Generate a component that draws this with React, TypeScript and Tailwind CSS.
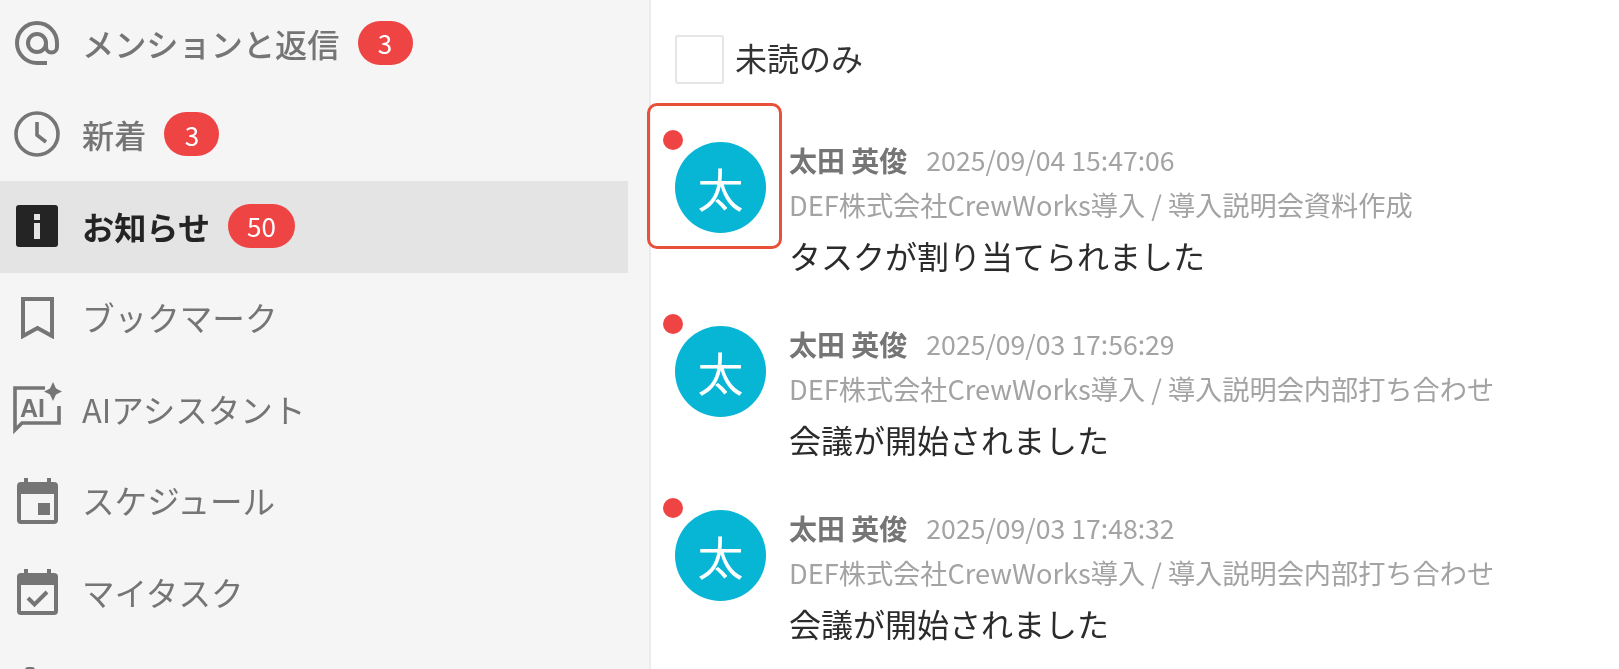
import type { ReactNode } from "react";

const FONT = "font-['Noto_Sans_CJK_JP','Noto_Sans',sans-serif]";
const GRAY = "#757575";

function AtIcon() {
  return (
    <svg viewBox="0 0 46 46" className="h-[46px] w-[46px]" fill="none" stroke={GRAY} strokeWidth="4">
      <circle cx="23" cy="23" r="9" />
      <path d="M32 23v4a5.5 5.5 0 0 0 11 0v-4a20 20 0 1 0-20 20h10" />
    </svg>
  );
}

function ClockIcon() {
  return (
    <svg viewBox="0 0 46 46" className="h-[46px] w-[46px]" fill="none" stroke={GRAY} strokeWidth="3.6">
      <circle cx="23" cy="23" r="21" />
      <path d="M23 11v13l9 7" />
    </svg>
  );
}

function InfoSquare() {
  return (
    <svg viewBox="0 0 42 42" className="h-[42px] w-[42px]">
      <rect width="42" height="42" rx="3" fill="#242424" />
      <rect x="18" y="9" width="6" height="6" fill="#e4e4e4" />
      <rect x="18" y="18" width="6" height="16" fill="#e4e4e4" />
    </svg>
  );
}

function BookmarkIcon() {
  return (
    <svg viewBox="0 0 33 42" className="h-[42px] w-[33px]" fill="none" stroke={GRAY} strokeWidth="4">
      <path d="M2 2h29v37l-14.5-8L2 39z" />
    </svg>
  );
}

function AiChat() {
  return (
    <svg viewBox="0 0 50 54" className="h-[54px] w-[50px]">
      <path d="M33 6H3v42l7-7h37V24" fill="none" stroke={GRAY} strokeWidth="3.6" />
      <text x="8" y="35" fontSize="25" fontWeight="700" fill={GRAY} fontFamily="Liberation Sans, sans-serif">AI</text>
      <path d="M41 0l3 6.5 6 3-6 3-3 6.5-3-6.5-6-3 6-3z" fill={GRAY} />
    </svg>
  );
}

function CalendarIcon({ children }: { children: ReactNode }) {
  return (
    <svg viewBox="0 0 41 46" className="h-[46px] w-[41px]">
      <rect x="7" y="0" width="4" height="8" fill={GRAY} />
      <rect x="30" y="0" width="4" height="8" fill={GRAY} />
      <rect y="4" width="41" height="42" rx="4" fill={GRAY} />
      <rect x="4" y="16" width="33" height="26" fill="#f5f5f5" />
      {children}
    </svg>
  );
}

type Item = { label: string; icon: ReactNode; badge?: string; active?: boolean };

const items: Item[] = [
  { label: "メンションと返信", icon: <AtIcon />, badge: "3" },
  { label: "新着", icon: <ClockIcon />, badge: "3" },
  { label: "お知らせ", icon: <InfoSquare />, badge: "50", active: true },
  { label: "ブックマーク", icon: <BookmarkIcon /> },
  { label: "AIアシスタント", icon: <AiChat /> },
  { label: "スケジュール", icon: <CalendarIcon><rect x="21" y="25" width="12" height="12" fill={GRAY} /></CalendarIcon> },
  { label: "マイタスク", icon: <CalendarIcon><path d="M11 29l6.5 6.5L30 23" fill="none" stroke={GRAY} strokeWidth="4" /></CalendarIcon> },
  // next row, only the tip of its icon is on screen
  { label: "", icon: <svg viewBox="0 0 42 33" className="h-[33px] w-[42px]"><rect x="9" y="0" width="10" height="33" rx="3" fill={GRAY} /></svg> },
];

const notices = [
  { date: "2025/09/04 15:47:06", path: "DEF株式会社CrewWorks導入 / 導入説明会資料作成", title: "タスクが割り当てられました" },
  { date: "2025/09/03 17:56:29", path: "DEF株式会社CrewWorks導入 / 導入説明会内部打ち合わせ", title: "会議が開始されました" },
  { date: "2025/09/03 17:48:32", path: "DEF株式会社CrewWorks導入 / 導入説明会内部打ち合わせ", title: "会議が開始されました" },
];

function SideRow({ item }: { item: Item }) {
  return (
    <div className={`flex h-[91.6px] shrink-0 items-center pb-[2px] ${item.active ? "bg-[#e4e4e4] font-bold text-[#242424]" : "text-[#757575]"}`}>
      <div className="flex w-[74px] shrink-0 justify-center">{item.icon}</div>
      <span className={`ml-[8px] leading-none ${item.badge ? "text-[32.2px]" : "text-[32.6px]"} ${item.badge && !item.active ? "font-medium" : ""}`}>{item.label}</span>
      {item.badge && (
        <span className="ml-[18px] flex h-[44px] min-w-[55px] items-center justify-center rounded-full bg-[#ef4444] px-[19px] text-[26px] font-normal text-white">
          {item.badge}
        </span>
      )}
    </div>
  );
}

function Notice({ n }: { n: (typeof notices)[number] }) {
  return (
    <div className="flex h-[184px] shrink-0 pl-[24px]">
      <div className="relative mt-[38px] h-[91px] w-[91px] shrink-0">
        <span className="absolute -left-[12px] -top-[12px] h-[20px] w-[20px] rounded-full bg-[#ef4444]" />
        <div className="flex h-full w-full items-center justify-center rounded-full bg-[#06b6d4] text-[46px] text-white">太</div>
      </div>
      <div className="ml-[23px] mt-[37px] flex flex-col">
        <div className="flex h-[38px] items-center">
          <span className="text-[28px] font-bold text-[#757575]">太田 英俊</span>
          <span className="ml-[19px] text-[26.6px] text-[#a3a3a3]">{n.date}</span>
        </div>
        <div className="mt-[6px] flex h-[38px] items-center text-[27.2px] text-[#a3a3a3]">{n.path}</div>
        <div className="mt-[13px] flex h-[38px] items-center text-[32px] text-[#2b2b2b]">{n.title}</div>
      </div>
    </div>
  );
}

export default function App() {
  return (
    <div className={`flex h-[669px] w-[1619px] overflow-hidden bg-white blur-[0.6px] ${FONT}`}>
      <aside className="h-full w-[651px] shrink-0 overflow-hidden border-r-2 border-[#ececec] bg-[#f5f5f5] pr-[21px]">
        <div className="-mt-[2px] flex flex-col">
          {items.map((item, i) => (
            <SideRow key={i} item={item} />
          ))}
        </div>
      </aside>
      <main className="relative flex-1">
        <div className="flex h-[104px] items-start pl-[24px] pt-[35px]">
          <span className="h-[49px] w-[49px] rounded-[3px] border-2 border-[#e5e5e5] bg-white" />
          <span className="ml-[11px] -mt-[2px] text-[32px] leading-[49px] text-[#333333]">未読のみ</span>
        </div>
        <div className="flex flex-col">
          {notices.map((n, i) => (
            <Notice key={i} n={n} />
          ))}
        </div>
        <div className="absolute left-[-4px] top-[103px] h-[146px] w-[135px] rounded-[10px] border-[3px] border-[#e8503a]" />
      </main>
    </div>
  );
}
